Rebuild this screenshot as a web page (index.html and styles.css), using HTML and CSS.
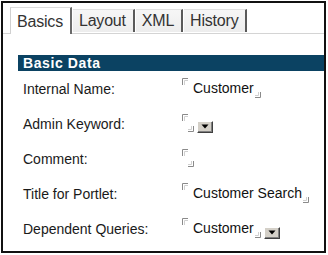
FILE: index.html
```html
<!DOCTYPE html>
<html>
<head>
<meta charset="utf-8">
<link rel="stylesheet" href="styles.css">
</head>
<body>
<div class="frame">
  <div class="tabs">
    <div class="tab active">Basics</div>
    <div class="tab">Layout</div>
    <div class="tab">XML</div>
    <div class="tab">History</div>
  </div>
  <div class="section">
    <div class="section-title">Basic Data</div>
    <div class="rows">
      <div class="label">Internal Name:</div>
      <div class="value">
        <span class="field">
          <svg class="mark-start" width="6" height="7" viewBox="0 0 6 7"><path d="M0.5 7V0.5H6" fill="none" stroke="#8a8a8a"/><path d="M2.5 7V2.5H6" fill="none" stroke="#d0d0d0"/></svg>
          <span class="text">Customer</span>
          <svg class="mark-end" width="6" height="6" viewBox="0 0 6 6"><path d="M0 5.5H5.5V0" fill="none" stroke="#8a8a8a"/><path d="M0 3.5H3.5V0" fill="none" stroke="#d0d0d0"/></svg>
        </span>
      </div>

      <div class="label">Admin Keyword:</div>
      <div class="value">
        <span class="field empty">
          <svg class="mark-start" width="6" height="7" viewBox="0 0 6 7"><path d="M0.5 7V0.5H6" fill="none" stroke="#8a8a8a"/><path d="M2.5 7V2.5H6" fill="none" stroke="#d0d0d0"/></svg>
          <span class="text"></span>
          <svg class="mark-end" width="6" height="6" viewBox="0 0 6 6"><path d="M0 5.5H5.5V0" fill="none" stroke="#8a8a8a"/><path d="M0 3.5H3.5V0" fill="none" stroke="#d0d0d0"/></svg>
          <span class="dropbtn"><svg width="8" height="5" viewBox="0 0 8 5"><path d="M0.5 0.5H7.5L4 4.5Z" fill="#000"/></svg></span>
        </span>
      </div>

      <div class="label">Comment:</div>
      <div class="value">
        <span class="field empty">
          <svg class="mark-start" width="6" height="7" viewBox="0 0 6 7"><path d="M0.5 7V0.5H6" fill="none" stroke="#8a8a8a"/><path d="M2.5 7V2.5H6" fill="none" stroke="#d0d0d0"/></svg>
          <span class="text"></span>
          <svg class="mark-end" width="6" height="6" viewBox="0 0 6 6"><path d="M0 5.5H5.5V0" fill="none" stroke="#8a8a8a"/><path d="M0 3.5H3.5V0" fill="none" stroke="#d0d0d0"/></svg>
        </span>
      </div>

      <div class="label">Title for Portlet:</div>
      <div class="value">
        <span class="field">
          <svg class="mark-start" width="6" height="7" viewBox="0 0 6 7"><path d="M0.5 7V0.5H6" fill="none" stroke="#8a8a8a"/><path d="M2.5 7V2.5H6" fill="none" stroke="#d0d0d0"/></svg>
          <span class="text">Customer Search</span>
          <svg class="mark-end" width="6" height="6" viewBox="0 0 6 6"><path d="M0 5.5H5.5V0" fill="none" stroke="#8a8a8a"/><path d="M0 3.5H3.5V0" fill="none" stroke="#d0d0d0"/></svg>
        </span>
      </div>

      <div class="label">Dependent Queries:</div>
      <div class="value">
        <span class="field">
          <svg class="mark-start" width="6" height="7" viewBox="0 0 6 7"><path d="M0.5 7V0.5H6" fill="none" stroke="#8a8a8a"/><path d="M2.5 7V2.5H6" fill="none" stroke="#d0d0d0"/></svg>
          <span class="text">Customer</span>
          <svg class="mark-end" width="6" height="6" viewBox="0 0 6 6"><path d="M0 5.5H5.5V0" fill="none" stroke="#8a8a8a"/><path d="M0 3.5H3.5V0" fill="none" stroke="#d0d0d0"/></svg>
          <span class="dropbtn"><svg width="8" height="5" viewBox="0 0 8 5"><path d="M0.5 0.5H7.5L4 4.5Z" fill="#000"/></svg></span>
        </span>
      </div>
    </div>
  </div>
</div>
</body>
</html>
```

FILE: styles.css
```css
* { box-sizing: border-box; }
html, body { margin: 0; padding: 0; background: #fff; }
body { font-family: "Liberation Sans", Arial, sans-serif; color: #1a1a1a; }

.frame {
  margin: 1px 0 0 1px;
  width: 325px;
  height: 252px;
  border: 2px solid #111;
  overflow: hidden;
}

.tabs {
  display: flex;
  align-items: flex-end;
  gap: 1px;
  padding: 5px 0 0 7px;
  border-bottom: 1px solid #d4d4d4;
  height: 31px;
}

.tab {
  font-size: 16px;
  letter-spacing: -0.2px;
  color: #333;
  height: 23px;
  line-height: 22px;
  padding: 0 7px 0 6px;
  background: linear-gradient(#f6f6f6, #ededed);
  border-top: 1px solid #e2e2e2;
  border-right: 2px solid #5a5a5a;
  margin-bottom: 1px;
}

.tab.active {
  height: 27px;
  line-height: 28px;
  background: #fff;
  border-left: 1px solid #d0d0d0;
  border-top: 1px solid #dcdcdc;
  border-right: 2px solid #6a6a6a;
  margin-bottom: -1px;
}

.section {
  margin: 21px 0 0 15px;
}

.section-title {
  background: #0b4262;
  color: #fff;
  font-weight: bold;
  font-size: 14px;
  height: 16px;
  line-height: 16px;
  padding-left: 5px;
  letter-spacing: 0.6px;
}

.rows {
  display: grid;
  grid-template-columns: 159px 1fr;
  grid-auto-rows: 35px;
  padding-left: 5px;
}

.label {
  font-size: 14px;
  display: flex;
  align-items: center;
  color: #1a1a1a;
}

.value {
  display: flex;
  align-items: center;
}

.field {
  display: inline-flex;
  height: 21px;
}

.field.empty { height: 19px; }

.mark-start { align-self: flex-start; display: block; }
.mark-end { align-self: flex-end; display: block; margin-bottom: 1px; }

.text {
  font-size: 14px;
  line-height: 21px;
  padding-left: 5px;
  padding-right: 1px;
  color: #111;
}

.field.empty .text { width: 0; padding: 0; }

.dropbtn {
  align-self: flex-end;
  margin-left: 3px;
  width: 16px;
  height: 12px;
  background: #d4d0c8;
  border-top: 1px solid #fff;
  border-left: 1px solid #fff;
  border-right: 1px solid #404040;
  border-bottom: 1px solid #404040;
  box-shadow: inset -1px -1px 0 #808080;
  display: flex;
  align-items: center;
  justify-content: center;
}
.dropbtn svg { display: block; margin-top: -1px; }
```
